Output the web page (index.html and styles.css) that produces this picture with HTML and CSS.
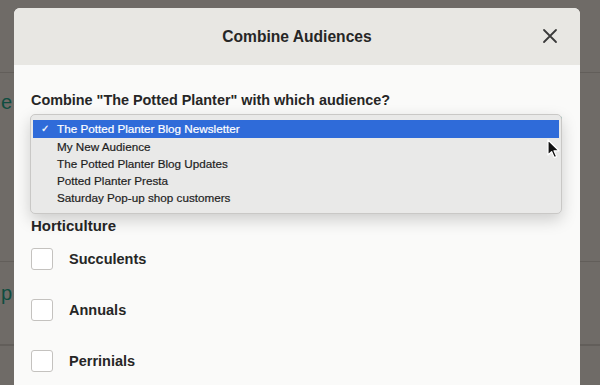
FILE: index.html
```html
<!DOCTYPE html>
<html lang="en">
  <head>
    <meta charset="UTF-8" />
    <meta name="viewport" content="width=device-width, initial-scale=1.0" />
    <title>Combine Audiences</title>
    <link rel="stylesheet" href="styles.css">
  </head>
  <body>
    <!-- page behind the overlay -->
    <div class="page">
      <div class="page-row top"></div>
      <div class="page-row first"><span class="peek">e</span></div>
      <div class="page-row second"><span class="peek">p</span></div>
      <div class="page-row"></div>
    </div>

    <div class="modal">
      <div class="modal-header">
        <h2>Combine Audiences</h2>
        <button class="close" aria-label="Close">
          <svg width="16" height="16" viewBox="0 0 16 16">
            <path d="M2 2 L14 14 M14 2 L2 14" stroke="#3a3a3a" stroke-width="1.8" stroke-linecap="round" />
          </svg>
        </button>
      </div>

      <div class="modal-body">
        <label class="question">Combine "The Potted Planter" with which audience?</label>

        <div class="select-wrap">
          <div class="select"></div>
          <ul class="menu">
            <li class="active"><span class="check">&#10003;</span>The Potted Planter Blog Newsletter</li>
            <li>My New Audience</li>
            <li>The Potted Planter Blog Updates</li>
            <li>Potted Planter Presta</li>
            <li>Saturday Pop-up shop customers</li>
          </ul>
          <svg class="cursor" width="14" height="22" viewBox="0 0 14 22">
            <path d="M1 1 L1 16 L4.6 12.6 L7.2 18.6 L9.6 17.6 L7 11.8 L12 11.8 Z" fill="#111" stroke="#fff" stroke-width="1.2" stroke-linejoin="round" />
          </svg>
        </div>

        <h3>Horticulture</h3>

        <div class="option"><span class="box"></span>Succulents</div>
        <div class="option"><span class="box"></span>Annuals</div>
        <div class="option"><span class="box"></span>Perrinials</div>
      </div>
    </div>
  </body>
</html>
```

FILE: styles.css
```css
body {
  margin: 0;
  background-color: #6f6b67;
  font-family: "Liberation Sans", Arial, sans-serif;
  color: #262626;
  overflow: hidden;
  height: 385px;
  position: relative;
}

/* page behind the dimmed overlay */
.page {
  display: flex;
  flex-direction: column;
}

.page-row {
  border-bottom: 1px solid #625e5a;
}

.page-row.top {
  height: 72px;
}

.page-row.first {
  height: 189px;
  padding-top: 18px;
  box-sizing: border-box;
}

.page-row.second {
  height: 83px;
  padding-top: 20px;
  box-sizing: border-box;
}

.peek {
  font-size: 20px;
  color: #0f4d40;
  margin-left: 1px;
}

.modal {
  position: absolute;
  left: 14px;
  top: 8px;
  width: 566px;
  height: 377px;
  border-radius: 6px 6px 0 0;
  overflow: hidden;
  background-color: #fafaf9;
}

.modal-header {
  height: 57px;
  background-color: #e8e7e3;
  display: flex;
  align-items: center;
  justify-content: center;
  position: relative;
}

.modal-header h2 {
  margin: 0;
  font-size: 15.6px;
  font-weight: bold;
  color: #262626;
}

.close {
  position: absolute;
  right: 22px;
  top: 20px;
  border: 0;
  padding: 0;
  background: none;
  width: 16px;
  height: 16px;
}

.close svg {
  display: block;
}

.modal-body {
  padding: 26px 18px 0 17px;
}

.question {
  display: block;
  font-size: 14.4px;
  font-weight: bold;
  line-height: 18px;
  margin-bottom: 7px;
}

.select-wrap {
  position: relative;
}

.select {
  height: 40px;
  border: 1px solid #d0cfcc;
  border-right: 2px solid #2a9d8f;
  border-radius: 3px;
  background-color: #fff;
}

.menu {
  position: absolute;
  left: -1px;
  top: -2px;
  right: 0;
  margin: 0;
  padding: 5px 2px 7px 2px;
  list-style: none;
  background-color: #e9e9e8;
  border: 1px solid #c9c8c6;
  border-radius: 5px;
  box-shadow: 0 6px 16px rgba(0, 0, 0, 0.18);
}

.menu li {
  height: 17px;
  line-height: 17px;
  font-size: 11.7px;
  padding-left: 24px;
  position: relative;
  color: #1e1e1e;
  -webkit-text-stroke: 0.2px #1e1e1e;
}

.menu li.active {
  height: 18px;
  line-height: 18px;
  background-color: #2f6bd9;
  color: #fff;
  -webkit-text-stroke: 0.2px #fff;
}

.check {
  position: absolute;
  left: 8px;
  font-size: 10px;
}

.cursor {
  position: absolute;
  left: 516px;
  top: 23px;
}

.modal-body h3 {
  margin: 59px 0 12px 0;
  font-size: 15px;
  font-weight: bold;
  line-height: 18px;
}

.option {
  display: flex;
  align-items: center;
  height: 23px;
  margin-bottom: 28px;
  font-size: 14.5px;
  font-weight: bold;
}

.box {
  width: 20px;
  height: 20px;
  border: 1.5px solid #c4c2bf;
  border-radius: 3px;
  background-color: #fff;
  margin-right: 16px;
}
```
